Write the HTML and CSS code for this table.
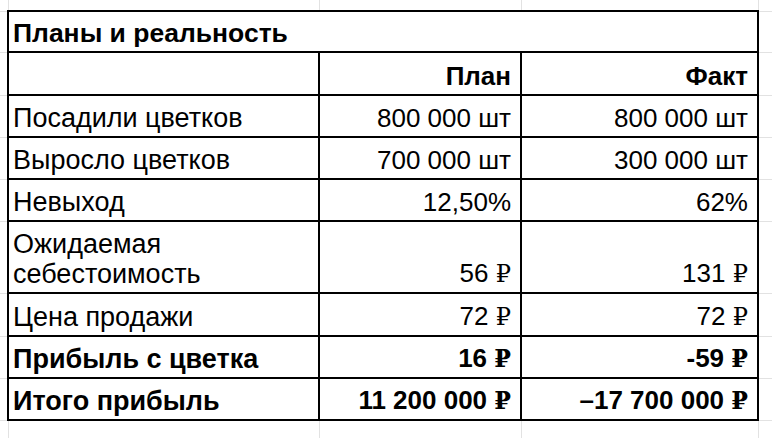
FILE: index.html
```html
<!DOCTYPE html>
<html lang="ru">
<head>
<meta charset="utf-8">
<title>Планы и реальность</title>
<link rel="stylesheet" href="styles.css">
</head>
<body>
<table class="sheet">
  <colgroup>
    <col class="col-ml">
    <col class="col-1">
    <col class="col-2">
    <col class="col-3">
    <col class="col-mr">
  </colgroup>
  <tr class="row-top"><td class="g"></td><td class="g"></td><td class="g"></td><td class="g"></td><td class="g"></td></tr>
  <tr class="row-title"><td class="g"></td><td class="d title" colspan="3">Планы и реальность</td><td class="g"></td></tr>
  <tr class="row-head"><td class="g"></td><td class="d"></td><td class="d num b">План</td><td class="d num b">Факт</td><td class="g"></td></tr>
  <tr class="row"><td class="g"></td><td class="d">Посадили цветков</td><td class="d num">800 000 шт</td><td class="d num">800 000 шт</td><td class="g"></td></tr>
  <tr class="row"><td class="g"></td><td class="d">Выросло цветков</td><td class="d num">700 000 шт</td><td class="d num">300 000 шт</td><td class="g"></td></tr>
  <tr class="row"><td class="g"></td><td class="d">Невыход</td><td class="d num">12,50%</td><td class="d num">62%</td><td class="g"></td></tr>
  <tr class="row-tall"><td class="g"></td><td class="d">Ожидаемая<br>себестоимость</td><td class="d num">56 <span class="rub">₽</span></td><td class="d num">131 <span class="rub">₽</span></td><td class="g"></td></tr>
  <tr class="row-head"><td class="g"></td><td class="d">Цена продажи</td><td class="d num">72 <span class="rub">₽</span></td><td class="d num">72 <span class="rub">₽</span></td><td class="g"></td></tr>
  <tr class="row"><td class="g"></td><td class="d b">Прибыль с цветка</td><td class="d num b">16 <span class="rub">₽</span></td><td class="d num b">-59 <span class="rub">₽</span></td><td class="g"></td></tr>
  <tr class="row"><td class="g"></td><td class="d b">Итого прибыль</td><td class="d num b">11 200 000 <span class="rub">₽</span></td><td class="d num b">–17 700 000 <span class="rub">₽</span></td><td class="g"></td></tr>
  <tr class="row-bottom"><td class="g"></td><td class="g"></td><td class="g"></td><td class="g"></td><td class="g"></td></tr>
</table>
</body>
</html>
```
FILE: styles.css
```css
html, body {
  margin: 0;
  padding: 0;
  background: #ffffff;
  overflow: hidden;
}
.sheet {
  border-collapse: collapse;
  table-layout: fixed;
  width: 772px;
  font-family: "Liberation Sans", Arial, sans-serif;
  font-size: 27px;
  line-height: 30px;
  color: #000000;
}
.col-ml { width: 8px; }
.col-1 { width: 311px; }
.col-2 { width: 202px; }
.col-3 { width: 237px; }
.col-mr { width: 14px; }

.sheet td {
  border: 1px solid #e2e2e2;
  padding: 0 9px 3px 4px;
  vertical-align: bottom;
  white-space: nowrap;
  overflow: hidden;
}
.sheet td.g { padding: 0; }
.sheet tr td:first-child { border-left: none; }
.sheet tr td:last-child { border-right: none; }
.row-top td { border-top: none; }
.row-bottom td { border-bottom: none; }

.sheet td.d {
  border: 2px solid #000000;
  background: #ffffff;
}
.row-top { height: 11px; }
.row-title { height: 41px; }
.row-head { height: 43px; }
.row { height: 42px; }
.row-tall { height: 72px; }
.row-bottom { height: 18px; }

.num { text-align: right; font-size: 26px; }
.b { font-weight: bold; }
.title { font-weight: bold; font-size: 26.5px; }
.rub {
  font-family: "DejaVu Serif", "Liberation Serif", serif;
  font-size: 24px;
}
```
